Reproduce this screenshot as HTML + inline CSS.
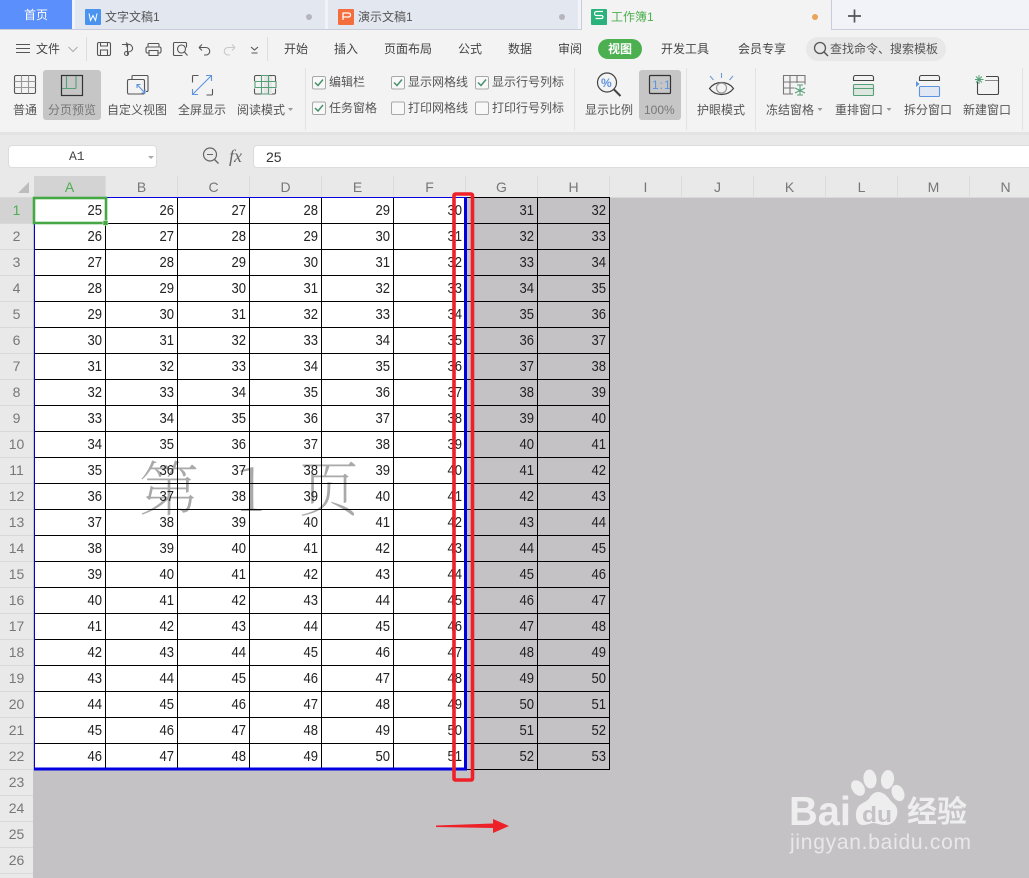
<!DOCTYPE html>
<html lang="zh"><head><meta charset="utf-8"><title>工作簿1</title>
<style>
html,body{margin:0;padding:0;width:1029px;height:878px;overflow:hidden;background:#c4c2c5}
body{position:relative;font-family:"Liberation Sans","Noto Sans CJK SC",sans-serif;font-size:12px;color:#444}
.a{position:absolute;white-space:nowrap}
.t{position:absolute;white-space:nowrap;line-height:16px;font-size:12px;color:#555}
.m{position:absolute;top:41px;white-space:nowrap;line-height:16px;font-size:12px;color:#444}
.l{position:absolute;top:102px;white-space:nowrap;line-height:16px;font-size:12px;color:#555}
.c{position:absolute;width:71px;height:21px;top:176px;line-height:22px;text-align:center;font-size:14px;color:#777;border-right:1px solid #dcdcdc}
.r{position:absolute;left:0;width:33px;height:25px;line-height:25px;text-align:center;font-size:14px;color:#777;border-bottom:1px solid #d8d8d8;background:#e9e9e9}
table{position:absolute;left:34px;top:198px;border-collapse:separate;border-spacing:0;table-layout:fixed;width:576px}
tr{height:26px}
td{box-sizing:border-box;width:72px;height:26px;padding:0 3px 0 0;text-align:right;font-size:15px;line-height:25px;color:#222;border-right:1px solid #000;border-bottom:1px solid #000;overflow:hidden;vertical-align:top}
i{font-style:normal;display:block;height:25px;line-height:25px;transform:scaleX(.87);transform-origin:100% 50%}
</style></head><body>
<!-- tab strip -->
<div class="a" style="left:0;top:0;width:1029px;height:29px;background:#f1f3f8"></div>
<div class="a" style="left:0;top:0;width:72px;height:29px;background:#5b8ffb;color:#fff;text-align:center;line-height:30px;font-size:12px">首页</div>
<div class="a" style="left:75px;top:0;width:250px;height:29px;background:#e3e7f0"></div>
<div class="a" style="left:328px;top:0;width:250px;height:29px;background:#e3e7f0"></div>
<div class="a" style="left:0;top:29px;width:1029px;height:1px;background:#c9cdd9"></div>
<div class="a" style="left:581px;top:0;width:249px;height:30px;background:#f3f3f3;box-sizing:content-box;border-left:1px solid #c9cdd9;border-right:1px solid #c9cdd9;border-top:1px solid #c9cdd9;margin-top:-1px"></div>
<div class="t" style="left:105px;top:9px;color:#555">文字文稿1</div>
<div class="t" style="left:358px;top:9px;color:#555">演示文稿1</div>
<div class="t" style="left:611px;top:9px;color:#4caf50">工作簿1</div>
<div class="a" style="left:0;top:30px;width:1029px;height:102px;background:#f3f3f3"></div>
<div class="a" style="left:0;top:132px;width:1029px;height:3px;background:#e3e3e3"></div>
<div class="a" style="left:0;top:135px;width:1029px;height:41px;background:#e9e9e9"></div>
<!-- active ribbon backgrounds -->
<div class="a" style="left:43px;top:70px;width:58px;height:50px;background:#c6c6c6;border-radius:3px"></div>
<div class="a" style="left:639px;top:70px;width:42px;height:50px;background:#c6c6c6;border-radius:3px"></div>
<div class="a" style="left:598px;top:39px;width:44px;height:20px;background:#4caf50;border-radius:10px"></div>
<div class="a" style="left:806px;top:37px;width:140px;height:24px;background:#e8e8e8;border-radius:12px"></div>
<!-- menu text -->
<div class="m" style="left:36px">文件</div>
<div class="m" style="left:284px">开始</div>
<div class="m" style="left:334px">插入</div>
<div class="m" style="left:384px">页面布局</div>
<div class="m" style="left:458px">公式</div>
<div class="m" style="left:508px">数据</div>
<div class="m" style="left:558px">审阅</div>
<div class="m" style="left:608px;color:#fff;font-weight:bold">视图</div>
<div class="m" style="left:661px">开发工具</div>
<div class="m" style="left:738px">会员专享</div>
<div class="m" style="left:830px;color:#555">查找命令、搜索模板</div>
<!-- ribbon labels -->
<div class="l" style="left:13px">普通</div>
<div class="l" style="left:48px;color:#777">分页预览</div>
<div class="l" style="left:107px">自定义视图</div>
<div class="l" style="left:178px">全屏显示</div>
<div class="l" style="left:237px">阅读模式</div>
<div class="t" style="left:329px;top:74px">编辑栏</div>
<div class="t" style="left:329px;top:100px">任务窗格</div>
<div class="t" style="left:408px;top:74px">显示网格线</div>
<div class="t" style="left:408px;top:100px">打印网格线</div>
<div class="t" style="left:492px;top:74px">显示行号列标</div>
<div class="t" style="left:492px;top:100px">打印行号列标</div>
<div class="l" style="left:585px">显示比例</div>
<div class="l" style="left:644px;color:#777">100%</div>
<div class="l" style="left:697px">护眼模式</div>
<div class="l" style="left:766px">冻结窗格</div>
<div class="l" style="left:835px">重排窗口</div>
<div class="l" style="left:904px">拆分窗口</div>
<div class="l" style="left:963px">新建窗口</div>
<!-- formula bar -->
<div class="a" style="left:8px;top:145px;width:147px;height:21px;background:#fff;border:1px solid #dcdcdc;border-radius:4px"></div>
<div class="a" style="left:69px;top:149px;font-family:'Liberation Mono',monospace;font-size:13px;line-height:16px;color:#444">A1</div>
<div class="a" style="left:253px;top:145px;width:780px;height:21px;background:#fff;border:1px solid #dcdcdc;border-radius:4px"></div>
<div class="a" style="left:266px;top:149px;font-size:14px;line-height:16px;color:#333">25</div>
<div class="a" style="left:229px;top:146px;font-family:'Liberation Serif',serif;font-style:italic;font-size:18px;line-height:20px;color:#666">fx</div>
<!-- icons -->
<svg class="a" style="left:0;top:0" width="1029" height="176" viewBox="0 0 1029 176" fill="none">
<rect x="85" y="9" width="16" height="16" rx="1" fill="#4a94f0"/><path d="M89 13.500l1.500 7 2.500-5 2.500 5 1.500-7" stroke="#fff"/>
<rect x="338" y="9" width="16" height="16" rx="1" fill="#f46d3d"/><path d="M343 20v-7h5.500a2 2 0 0 1 0 4h-5" stroke="#fff" stroke-width="1.300"/>
<rect x="591" y="9" width="16" height="16" rx="1" fill="#2bb27c"/><path d="M603 13h-6.500a1.500 1.500 0 0 0 0 4h5a1.500 1.500 0 0 1 0 3h-6" stroke="#fff" stroke-width="1.200" transform="translate(0 -1.500)"/>
<circle cx="309" cy="17" r="3" fill="#b5b5bb"/><circle cx="562" cy="17" r="3" fill="#b5b5bb"/><circle cx="815" cy="17" r="3" fill="#e9a35a"/>
<path d="M848 16h13M854.500 9.500v13" stroke="#555" stroke-width="1.700"/>
<path d="M16 44.500h14M16 48.500h14M16 52.500h14" stroke="#555"/>
<path d="M68.500 47l4.500 4.500 4.500-4.500" stroke="#aaa"/>
<path d="M86.500 37v24M267.500 37v24" stroke="#ddd"/>
<g stroke="#555" stroke-width="1.100">
<path d="M97.500 44a1.500 1.500 0 0 1 1.500-1.500h10a1.500 1.500 0 0 1 1.500 1.500v10a1.500 1.500 0 0 1-1.500 1.500h-10a1.500 1.500 0 0 1-1.500-1.500zM100.500 42.500v3.500h7v-3.500M100.500 55.500v-5.500h7v5.500"/>
<path d="M122 44.500h5.500a4 4 0 0 1 5 3c.5 3-2 4.500-5 4.500 v2.500M126 42.500l2 2-2 2M127.500 44.500v9"/><circle cx="126.500" cy="53.500" r="2"/>
<path d="M148 47v-2.500a1 1 0 0 1 1-1h9a1 1 0 0 1 1 1v2.500M149 53h-1.500a1.500 1.500 0 0 1-1.500-1.500v-3a1.500 1.500 0 0 1 1.500-1.500h12a1.500 1.500 0 0 1 1.500 1.500v3a1.500 1.500 0 0 1-1.500 1.500h-1.500M149 50.500h9v5h-9z"/>
<path d="M182.500 55.500h-8a1 1 0 0 1-1-1v-11a1 1 0 0 1 1-1h11a1 1 0 0 1 1 1v4"/><circle cx="181.500" cy="49" r="4"/><path d="M184.500 52l3 3.500"/>
<path d="M199 47.500h7a3.500 3.500 0 0 1 0 7.500h-2M199 47.500l3-3M199 47.500l3 3"/>
<path d="M235 47.500h-7a3.500 3.500 0 0 0 0 7.500h2M235 47.500l-3-3M235 47.500l-3 3" stroke="#c8c8c8"/>
<path d="M251 47l3.500 3 3.500-3M251.500 53h6"/>
<rect x="14.500" y="75.500" width="21" height="18" rx="1.500"/><path d="M21.500 75.500v18M28.500 75.500v18M14.500 81.500h21M14.500 87.500h21" stroke="#999"/>
<rect x="61.500" y="75.500" width="21" height="20" stroke="#333" stroke-width="1.200"/><path d="M66.500 76v12.500M76 76v12.500M62 88.500h14" stroke="#55a077"/>
<path d="M132 79.500v-3a1 1 0 0 1 1-1h14a1 1 0 0 1 1 1v14a1 1 0 0 1-1 1h-1"/><rect x="127.500" y="79.500" width="17" height="14.500" rx="1.500" fill="#f3f3f3"/>
<path d="M192.500 82.500v-6a1 1 0 0 1 1-1h5M206.500 95h5a1 1 0 0 0 1-1v-5"/>
</g>
<path d="M137 84.500l8 8.500M137 88v-3.500h3.500M145 89.500v3.500h-3.500" stroke="#5e93df" stroke-width="1.100"/>
<path d="M202 85l9.500-9.500M206 75.500h5.500v5.500M202 85l-9.500 9.500M192.500 89v5.500h5.500" stroke="#5e93df" stroke-width="1.100"/>
<path d="M261 75.500h-5a1.500 1.500 0 0 0-1.500 1.500v4M261 94h-5a1.500 1.500 0 0 1-1.500-1.500v-4M269 75.500h5a1.500 1.500 0 0 1 1.500 1.500v4M269 94h5a1.500 1.500 0 0 0 1.500-1.500v-4" stroke="#555" stroke-width="1.100"/>
<rect x="264" y="76" width="8" height="18" fill="#e6e6e6"/>
<path d="M255 81.500h21v6h-21zM261.500 75.500h7v18.500h-7z" stroke="#55a077" stroke-width="1.100"/>
<path d="M305.500 68v62M574.500 68v62M686.500 68v62M755.500 68v62M1022.500 68v62" stroke="#e2e2e2"/>
<g stroke="#a8a8a8"><rect x="312.500" y="76.500" width="13" height="12.500" rx="1.500" fill="#f8f8f8"/><rect x="312.500" y="102" width="13" height="12.500" rx="1.500" fill="#f8f8f8"/><rect x="391.500" y="76.500" width="13" height="12.500" rx="1.500" fill="#f8f8f8"/><rect x="391.500" y="102" width="13" height="12.500" rx="1.500" fill="#f8f8f8"/><rect x="475.500" y="76.500" width="13" height="12.500" rx="1.500" fill="#f8f8f8"/><rect x="475.500" y="102" width="13" height="12.500" rx="1.500" fill="#f8f8f8"/></g>
<path d="M315 82.500l3 3 5-6M315 108l3 3 5-6M394 82.500l3 3 5-6M478 82.500l3 3 5-6" stroke="#48926c" stroke-width="1.500"/>
<path d="M288 108h5l-2.500 3zM817.500 108h5l-2.500 3zM886.500 108h5l-2.500 3z" fill="#999"/>
<circle cx="607" cy="82.500" r="9.500" stroke="#444" stroke-width="1.200"/><path d="M614 89.500l6.500 6.500" stroke="#444" stroke-width="2"/>
<rect x="649.500" y="75.500" width="21" height="18" rx="1" stroke="#333" stroke-width="1.200"/>
<path d="M710 76l3.500 4M721.500 73v5M733 76l-3.500 4" stroke="#6d9ad8" stroke-width="1.100"/>
<path d="M709.500 88.500c6-8 18-8 24 0c-6 8-18 8-24 0z" stroke="#444" stroke-width="1.200"/><circle cx="721.500" cy="88" r="5" stroke="#999" stroke-width="1.200"/>
<g stroke="#666" stroke-width="1.100"><path d="M793 94h-9.500v-18.500h21.500v9M783.500 82h21.500M783.500 88h11M790 76v18M797 76v7" stroke="#777"/></g>
<path d="M800 85v10M795 88l10 5M805 88l-10 5M797 95h6M797 85h6" stroke="#55a077" stroke-width="1.100"/>
<path d="M853.500 81v-3.500a2 2 0 0 1 2-2h16a2 2 0 0 1 2 2v3.500M853.500 80.500h20" stroke="#444" stroke-width="1.100"/>
<rect x="853.500" y="84.500" width="20" height="11" rx="1" fill="#dde6df" stroke="#55a077" stroke-width="1.100"/><path d="M854 88.500h19" stroke="#55a077"/>
<path d="M919.500 81v-3.500a2 2 0 0 1 2-2h16a2 2 0 0 1 2 2v3.500M919.500 80.500h20" stroke="#444" stroke-width="1.100"/>
<rect x="919.500" y="86.500" width="20" height="10" rx="1" fill="#e1e8f3" stroke="#5e93df" stroke-width="1.100"/><path d="M916 81v6l3.500-3z" fill="#5e93df"/>
<path d="M986 76.500h11a1.500 1.500 0 0 1 1.500 1.500v15a1.500 1.500 0 0 1-1.500 1.500h-18a1.500 1.500 0 0 1-1.500-1.500v-11" stroke="#444" stroke-width="1.100"/><path d="M985 80.500h13" stroke="#888"/>
<path d="M979 75v9M975 79.500h8.500M976 76.500l6 6M982 76.500l-6 6" stroke="#55a077"/>
<circle cx="820" cy="48" r="5.500" stroke="#555" stroke-width="1.300"/><path d="M824 52l4 4" stroke="#555" stroke-width="1.500"/>
<path d="M148 156h6l-3 3z" fill="#aaa"/>
<circle cx="210" cy="154.500" r="6.500" stroke="#666" stroke-width="1.200"/><path d="M207 154.500h6" stroke="#666"/><path d="M214.500 159.500l4 4" stroke="#666" stroke-width="1.300"/>
</svg>
<div class="a" style="left:601px;top:75px;font-size:12px;line-height:16px;color:#5e93df;font-weight:bold">%</div>
<div class="a" style="left:652px;top:77px;font-size:12px;line-height:16px;color:#5e93df;letter-spacing:1px">1:1</div>
<!-- sheet white page -->
<div class="a" style="left:34px;top:197px;width:431px;height:572px;background:#fff"></div>
<!-- watermark page number -->
<div class="a" style="left:139px;top:444px;font-family:'Noto Serif CJK SC',serif;font-size:60px;line-height:84px;color:#a9a9a9;font-weight:200">第</div>
<div class="a" style="left:236px;top:444px;font-family:'Noto Serif CJK SC',serif;font-size:60px;line-height:84px;color:#a9a9a9;font-weight:200">1</div>
<div class="a" style="left:299px;top:444px;font-family:'Noto Serif CJK SC',serif;font-size:60px;line-height:84px;color:#a9a9a9;font-weight:200">页</div>
<!-- grid -->
<table><tbody>
<tr><td><i>25</i></td><td><i>26</i></td><td><i>27</i></td><td><i>28</i></td><td><i>29</i></td><td><i>30</i></td><td><i>31</i></td><td><i>32</i></td></tr>
<tr><td><i>26</i></td><td><i>27</i></td><td><i>28</i></td><td><i>29</i></td><td><i>30</i></td><td><i>31</i></td><td><i>32</i></td><td><i>33</i></td></tr>
<tr><td><i>27</i></td><td><i>28</i></td><td><i>29</i></td><td><i>30</i></td><td><i>31</i></td><td><i>32</i></td><td><i>33</i></td><td><i>34</i></td></tr>
<tr><td><i>28</i></td><td><i>29</i></td><td><i>30</i></td><td><i>31</i></td><td><i>32</i></td><td><i>33</i></td><td><i>34</i></td><td><i>35</i></td></tr>
<tr><td><i>29</i></td><td><i>30</i></td><td><i>31</i></td><td><i>32</i></td><td><i>33</i></td><td><i>34</i></td><td><i>35</i></td><td><i>36</i></td></tr>
<tr><td><i>30</i></td><td><i>31</i></td><td><i>32</i></td><td><i>33</i></td><td><i>34</i></td><td><i>35</i></td><td><i>36</i></td><td><i>37</i></td></tr>
<tr><td><i>31</i></td><td><i>32</i></td><td><i>33</i></td><td><i>34</i></td><td><i>35</i></td><td><i>36</i></td><td><i>37</i></td><td><i>38</i></td></tr>
<tr><td><i>32</i></td><td><i>33</i></td><td><i>34</i></td><td><i>35</i></td><td><i>36</i></td><td><i>37</i></td><td><i>38</i></td><td><i>39</i></td></tr>
<tr><td><i>33</i></td><td><i>34</i></td><td><i>35</i></td><td><i>36</i></td><td><i>37</i></td><td><i>38</i></td><td><i>39</i></td><td><i>40</i></td></tr>
<tr><td><i>34</i></td><td><i>35</i></td><td><i>36</i></td><td><i>37</i></td><td><i>38</i></td><td><i>39</i></td><td><i>40</i></td><td><i>41</i></td></tr>
<tr><td><i>35</i></td><td><i>36</i></td><td><i>37</i></td><td><i>38</i></td><td><i>39</i></td><td><i>40</i></td><td><i>41</i></td><td><i>42</i></td></tr>
<tr><td><i>36</i></td><td><i>37</i></td><td><i>38</i></td><td><i>39</i></td><td><i>40</i></td><td><i>41</i></td><td><i>42</i></td><td><i>43</i></td></tr>
<tr><td><i>37</i></td><td><i>38</i></td><td><i>39</i></td><td><i>40</i></td><td><i>41</i></td><td><i>42</i></td><td><i>43</i></td><td><i>44</i></td></tr>
<tr><td><i>38</i></td><td><i>39</i></td><td><i>40</i></td><td><i>41</i></td><td><i>42</i></td><td><i>43</i></td><td><i>44</i></td><td><i>45</i></td></tr>
<tr><td><i>39</i></td><td><i>40</i></td><td><i>41</i></td><td><i>42</i></td><td><i>43</i></td><td><i>44</i></td><td><i>45</i></td><td><i>46</i></td></tr>
<tr><td><i>40</i></td><td><i>41</i></td><td><i>42</i></td><td><i>43</i></td><td><i>44</i></td><td><i>45</i></td><td><i>46</i></td><td><i>47</i></td></tr>
<tr><td><i>41</i></td><td><i>42</i></td><td><i>43</i></td><td><i>44</i></td><td><i>45</i></td><td><i>46</i></td><td><i>47</i></td><td><i>48</i></td></tr>
<tr><td><i>42</i></td><td><i>43</i></td><td><i>44</i></td><td><i>45</i></td><td><i>46</i></td><td><i>47</i></td><td><i>48</i></td><td><i>49</i></td></tr>
<tr><td><i>43</i></td><td><i>44</i></td><td><i>45</i></td><td><i>46</i></td><td><i>47</i></td><td><i>48</i></td><td><i>49</i></td><td><i>50</i></td></tr>
<tr><td><i>44</i></td><td><i>45</i></td><td><i>46</i></td><td><i>47</i></td><td><i>48</i></td><td><i>49</i></td><td><i>50</i></td><td><i>51</i></td></tr>
<tr><td><i>45</i></td><td><i>46</i></td><td><i>47</i></td><td><i>48</i></td><td><i>49</i></td><td><i>50</i></td><td><i>51</i></td><td><i>52</i></td></tr>
<tr><td><i>46</i></td><td><i>47</i></td><td><i>48</i></td><td><i>49</i></td><td><i>50</i></td><td><i>51</i></td><td><i>52</i></td><td><i>53</i></td></tr>
</tbody></table>
<!-- headers -->
<div class="a" style="left:0;top:176px;width:1029px;height:21px;background:#e9e9e9"></div>
<div class="a" style="left:0;top:197px;width:1029px;height:1px;background:#d8d8d8"></div>
<div class="a" style="left:34px;top:197px;width:576px;height:1px;background:#000"></div>
<svg class="a" style="left:0;top:176px" width="33" height="21"><path d="M29 6v11h-11z" fill="#bdbdbd"/></svg>
<div class="c" style="left:34px;background:#d3d3d3;color:#4caf50">A</div>
<div class="c" style="left:106px">B</div>
<div class="c" style="left:178px">C</div>
<div class="c" style="left:250px">D</div>
<div class="c" style="left:322px">E</div>
<div class="c" style="left:394px">F</div>
<div class="c" style="left:466px">G</div>
<div class="c" style="left:538px">H</div>
<div class="c" style="left:610px">I</div>
<div class="c" style="left:682px">J</div>
<div class="c" style="left:754px">K</div>
<div class="c" style="left:826px">L</div>
<div class="c" style="left:898px">M</div>
<div class="c" style="left:970px">N</div>
<div class="r" style="top:198px;background:#d3d3d3;color:#4caf50">1</div>
<div class="r" style="top:224px">2</div>
<div class="r" style="top:250px">3</div>
<div class="r" style="top:276px">4</div>
<div class="r" style="top:302px">5</div>
<div class="r" style="top:328px">6</div>
<div class="r" style="top:354px">7</div>
<div class="r" style="top:380px">8</div>
<div class="r" style="top:406px">9</div>
<div class="r" style="top:432px">10</div>
<div class="r" style="top:458px">11</div>
<div class="r" style="top:484px">12</div>
<div class="r" style="top:510px">13</div>
<div class="r" style="top:536px">14</div>
<div class="r" style="top:562px">15</div>
<div class="r" style="top:588px">16</div>
<div class="r" style="top:614px">17</div>
<div class="r" style="top:640px">18</div>
<div class="r" style="top:666px">19</div>
<div class="r" style="top:692px">20</div>
<div class="r" style="top:718px">21</div>
<div class="r" style="top:744px">22</div>
<div class="r" style="top:770px">23</div>
<div class="r" style="top:796px">24</div>
<div class="r" style="top:822px">25</div>
<div class="r" style="top:848px">26</div>
<div class="a" style="left:0;top:874px;width:33px;height:4px;background:#e9e9e9"></div>
<!-- overlays -->
<svg class="a" style="left:0;top:0" width="1029" height="878" viewBox="0 0 1029 878" fill="none">
<path d="M34.500 197.500h430M34.500 197v572" stroke="#0000e0"/>
<path d="M465.500 197v573M34 769h433" stroke="#0000e0" stroke-width="3"/>
<rect x="34" y="198" width="72" height="25" stroke="#45a845" stroke-width="2.600"/>
<rect x="103" y="220.500" width="5" height="5" fill="#45a845" stroke="#fff" stroke-width=".5"/>
<rect x="454" y="194" width="18.500" height="586" rx="1.500" stroke="#ee2129" stroke-width="3.600"/>
<path d="M436 825.500L493 823.500V819L509 826L493 833V828L436 827Z" fill="#ee2129"/>
<g fill="#eeeeee">
<ellipse cx="870" cy="779" rx="6.500" ry="9.500" transform="rotate(-8 870 779)"/>
<ellipse cx="887.500" cy="779.500" rx="6.500" ry="9.500" transform="rotate(8 887.500 779.500)"/>
<ellipse cx="858" cy="788" rx="6" ry="8.500" transform="rotate(-35 858 788)"/>
<ellipse cx="898" cy="793" rx="6" ry="8.500" transform="rotate(-25 898 793)"/>
<path d="M878 792c8 0 11 8 16 12c7 6 3 22-10 21c-4 0-8-2-10-2c-4 0-6 2-11 2c-8 0-8-12-6-16c3-7 10-6 13-12c2-3 5-5 8-5z"/>
</g>
<text x="789" y="825" font-family="Liberation Sans" font-weight="bold" font-size="41" fill="#eeeeee" textLength="62" lengthAdjust="spacingAndGlyphs">Bai</text>
<text x="862" y="822" font-family="Liberation Sans" font-weight="bold" font-size="22" fill="#c4c2c5" textLength="30" lengthAdjust="spacingAndGlyphs">du</text>
<text x="907" y="822" font-family="Noto Sans CJK SC" font-weight="bold" font-size="30" fill="#eeeeee">经验</text>
<text x="790" y="849" font-family="Liberation Sans" font-size="21" fill="#e8e8e8" textLength="181" lengthAdjust="spacing">jingyan.baidu.com</text>
</svg>
</body></html>
